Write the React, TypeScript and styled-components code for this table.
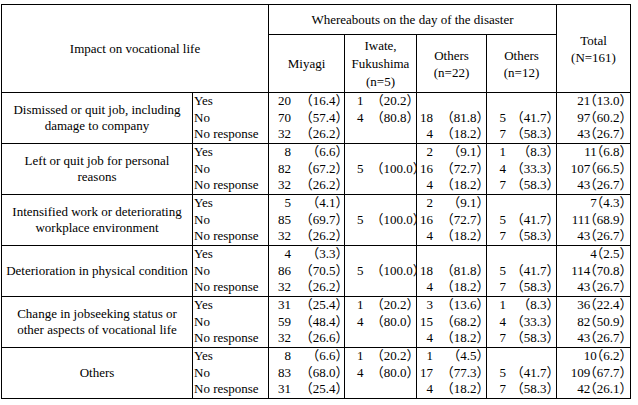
import React from "react";
import styled, { createGlobalStyle } from "styled-components";

const GlobalStyle = createGlobalStyle`
  html, body { margin: 0; padding: 0; background: #fff; }
  body {
    font-family: "Liberation Serif", "Noto Sans CJK JP", serif;
    color: #000;
  }
`;

const Page = styled.div`
  padding: 4px 0 0 1px;
`;

const Table = styled.div`
  display: grid;
  grid-template-columns: 190px 75px 75px 71px 69px 69px 73px;
  grid-template-rows: 29px 57px repeat(6, 50px);
  gap: 1px;
  padding: 1px;
  background: #000;
  width: max-content;
  font-size: 13px;
`;

const Cell = styled.div<{ $col: string; $row: string }>`
  grid-column: ${(p) => p.$col};
  grid-row: ${(p) => p.$row};
  background: #fff;
  min-width: 0;
`;

const HeadCell = styled(Cell)<{ $lh?: number }>`
  display: flex;
  flex-direction: column;
  align-items: center;
  justify-content: center;
  text-align: center;
  line-height: ${(p) => p.$lh ?? 17}px;
`;

const LabelCell = styled(Cell)`
  display: flex;
  flex-direction: column;
  align-items: center;
  justify-content: center;
  text-align: center;
  line-height: 16px;
`;

const AnswerCell = styled(Cell)`
  display: grid;
  grid-template-rows: repeat(3, 1fr);
  padding-left: 1px;
  line-height: 16.67px;
  white-space: nowrap;
`;

const NumCell = styled(Cell)<{ $countW: number; $padL: number; $padR: number }>`
  display: grid;
  grid-template-columns: ${(p) => p.$countW}px 1fr;
  grid-template-rows: repeat(3, 1fr);
  padding: 0 ${(p) => p.$padR}px 0 ${(p) => p.$padL}px;
  line-height: 16.67px;
  white-space: nowrap;
`;

const Count = styled.span<{ $align: "left" | "right" }>`
  text-align: ${(p) => p.$align};
`;

const Pct = styled.span`
  text-align: right;
  font-feature-settings: "halt";
`;

const TotalCell = styled(Cell)`
  display: grid;
  grid-template-rows: repeat(3, 1fr);
  padding-right: 4px;
  line-height: 16.67px;
  text-align: right;
  white-space: nowrap;
  font-feature-settings: "halt";
`;

type V = [number, string] | null;

interface Group {
  label: string[];
  miyagi: V[];
  iwate: V[];
  o22: V[];
  o12: V[];
  total: [number, string][];
}

const groups: Group[] = [
  {
    label: ["Dismissed or quit job, including", "damage to company"],
    miyagi: [[20, "16.4"], [70, "57.4"], [32, "26.2"]],
    iwate: [[1, "20.2"], [4, "80.8"], null],
    o22: [null, [18, "81.8"], [4, "18.2"]],
    o12: [null, [5, "41.7"], [7, "58.3"]],
    total: [[21, "13.0"], [97, "60.2"], [43, "26.7"]],
  },
  {
    label: ["Left or quit job for personal", "reasons"],
    miyagi: [[8, "6.6"], [82, "67.2"], [32, "26.2"]],
    iwate: [null, [5, "100.0"], null],
    o22: [[2, "9.1"], [16, "72.7"], [4, "18.2"]],
    o12: [[1, "8.3"], [4, "33.3"], [7, "58.3"]],
    total: [[11, "6.8"], [107, "66.5"], [43, "26.7"]],
  },
  {
    label: ["Intensified work or deteriorating", "workplace environment"],
    miyagi: [[5, "4.1"], [85, "69.7"], [32, "26.2"]],
    iwate: [null, [5, "100.0"], null],
    o22: [[2, "9.1"], [16, "72.7"], [4, "18.2"]],
    o12: [null, [5, "41.7"], [7, "58.3"]],
    total: [[7, "4.3"], [111, "68.9"], [43, "26.7"]],
  },
  {
    label: ["Deterioration in physical condition"],
    miyagi: [[4, "3.3"], [86, "70.5"], [32, "26.2"]],
    iwate: [null, [5, "100.0"], null],
    o22: [null, [18, "81.8"], [4, "18.2"]],
    o12: [null, [5, "41.7"], [7, "58.3"]],
    total: [[4, "2.5"], [114, "70.8"], [43, "26.7"]],
  },
  {
    label: ["Change in jobseeking status or", "other aspects of vocational life"],
    miyagi: [[31, "25.4"], [59, "48.4"], [32, "26.6"]],
    iwate: [[1, "20.2"], [4, "80.0"], null],
    o22: [[3, "13.6"], [15, "68.2"], [4, "18.2"]],
    o12: [[1, "8.3"], [4, "33.3"], [7, "58.3"]],
    total: [[36, "22.4"], [82, "50.9"], [43, "26.7"]],
  },
  {
    label: ["Others"],
    miyagi: [[8, "6.6"], [83, "68.0"], [31, "25.4"]],
    iwate: [[1, "20.2"], [4, "80.0"], null],
    o22: [[1, "4.5"], [17, "77.3"], [4, "18.2"]],
    o12: [null, [5, "41.7"], [7, "58.3"]],
    total: [[10, "6.2"], [109, "67.7"], [42, "26.1"]],
  },
];

interface ColCfg {
  key: "miyagi" | "iwate" | "o22" | "o12";
  col: number;
  countW: number;
  padL: number;
  padR: number;
  align: "left" | "right";
}

const numCols: ColCfg[] = [
  { key: "miyagi", col: 3, countW: 22, padL: 0, padR: 2, align: "right" },
  { key: "iwate", col: 4, countW: 20, padL: 12, padR: 3, align: "left" },
  { key: "o22", col: 5, countW: 16, padL: 0, padR: 3, align: "right" },
  { key: "o12", col: 6, countW: 19, padL: 0, padR: 3, align: "right" },
];

const answers = ["Yes", "No", "No response"];

export default function App() {
  return (
    <>
      <GlobalStyle />
      <Page>
        <Table>
          <HeadCell $col="1 / 3" $row="1 / 3">Impact on vocational life</HeadCell>
          <HeadCell $col="3 / 7" $row="1">Whereabouts on the day of the disaster</HeadCell>
          <HeadCell $col="7" $row="1 / 3">
            <span>Total</span>
            <span>(N=161)</span>
          </HeadCell>
          <HeadCell $col="3" $row="2">Miyagi</HeadCell>
          <HeadCell $col="4" $row="2" $lh={18}>
            <span>Iwate,</span>
            <span>Fukushima</span>
            <span>(n=5)</span>
          </HeadCell>
          <HeadCell $col="5" $row="2">
            <span>Others</span>
            <span>(n=22)</span>
          </HeadCell>
          <HeadCell $col="6" $row="2">
            <span>Others</span>
            <span>(n=12)</span>
          </HeadCell>

          {groups.map((g, gi) => {
            const row = String(gi + 3);
            return (
              <React.Fragment key={gi}>
                <LabelCell $col="1" $row={row}>
                  {g.label.map((l) => (
                    <span key={l}>{l}</span>
                  ))}
                </LabelCell>
                <AnswerCell $col="2" $row={row}>
                  {answers.map((a) => (
                    <span key={a}>{a}</span>
                  ))}
                </AnswerCell>
                {numCols.map((c) => (
                  <NumCell
                    key={c.key}
                    $col={String(c.col)}
                    $row={row}
                    $countW={c.countW}
                    $padL={c.padL}
                    $padR={c.padR}
                  >
                    {g[c.key].map((v, i) => (
                      <React.Fragment key={i}>
                        <Count $align={c.align}>{v ? v[0] : ""}</Count>
                        <Pct>{v ? `（${v[1]}）` : ""}</Pct>
                      </React.Fragment>
                    ))}
                  </NumCell>
                ))}
                <TotalCell $col="7" $row={row}>
                  {g.total.map((v, i) => (
                    <span key={i}>{`${v[0]}（${v[1]}）`}</span>
                  ))}
                </TotalCell>
              </React.Fragment>
            );
          })}
        </Table>
      </Page>
    </>
  );
}
